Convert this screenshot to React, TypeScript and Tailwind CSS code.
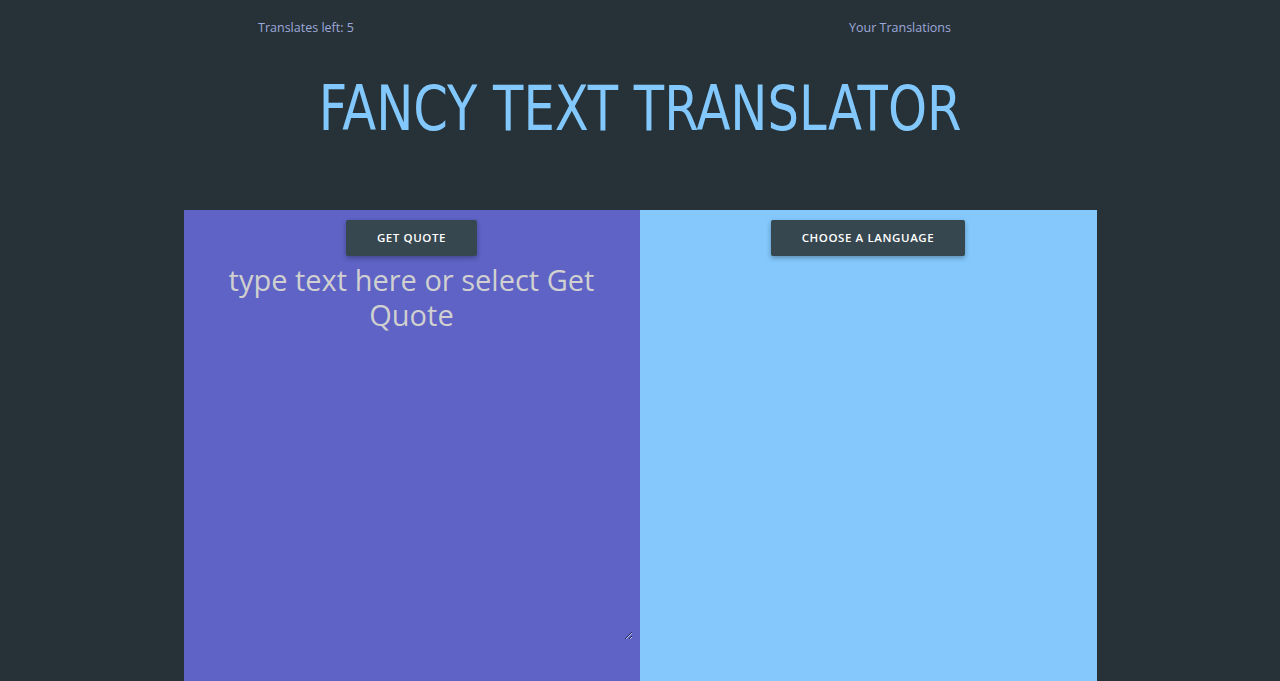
import { useState } from 'react';

export default function App() {
  const [text, setText] = useState('');

  return (
    <div className="min-h-[681px] bg-[#263238] flex flex-col" style={{ fontFamily: '"Open Sans", "Liberation Sans", sans-serif' }}>
      {/* Top nav */}
      <div className="flex h-[56px] items-center text-[12.5px] text-[#9fa8da] font-medium">
        <div className="w-[612px] text-center">Translates left: 5</div>
        <div className="w-[576px] text-center">Your Translations</div>
      </div>

      {/* Title */}
      <div className="flex justify-center mt-[22px]">
        <h1
          className="inline-block text-[#82c8fc] text-[62px] leading-none scale-x-[0.89]"
          style={{ fontFamily: '"DejaVu Sans Condensed", "Liberation Sans", sans-serif' }}
        >
          FANCY TEXT TRANSLATOR
        </h1>
      </div>

      {/* Panels */}
      <div className="mt-[70px] mx-auto w-[913px] flex flex-1 min-h-[471px]">
        <div className="w-[456px] bg-[#5e63c5] flex flex-col items-center pt-[10px]">
          <button className="w-[131px] h-[36px] bg-[#37474f] text-white text-[11.5px] font-semibold tracking-[0.6px] rounded-[2px] shadow-[0_2px_5px_rgba(0,0,0,0.3)]">
            GET QUOTE
          </button>
          <textarea
            value={text}
            onChange={(e) => setText(e.target.value)}
            placeholder="type text here or select Get Quote"
            className="mt-[6px] w-[442px] h-[378px] bg-transparent text-center text-[29px] leading-[35px] font-medium text-white placeholder:text-[#d0d0d0] outline-none"
          />
        </div>
        <div className="w-[457px] bg-[#84c8fc] flex flex-col items-center pt-[10px]">
          <button className="w-[194px] h-[36px] bg-[#37474f] text-white text-[11.5px] font-semibold tracking-[0.6px] rounded-[2px] shadow-[0_2px_5px_rgba(0,0,0,0.3)]">
            CHOOSE A LANGUAGE
          </button>
        </div>
      </div>
    </div>
  );
}
